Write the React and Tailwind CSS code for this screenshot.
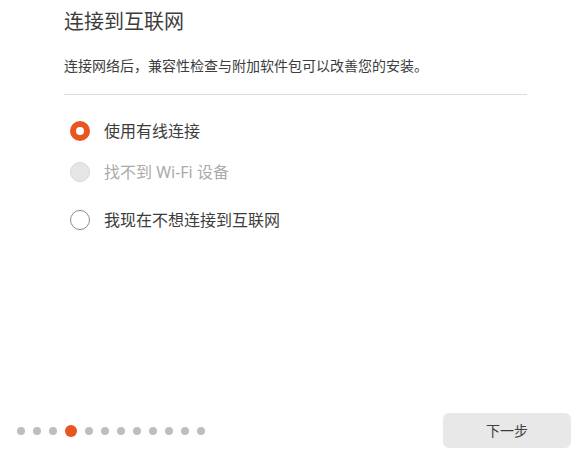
import { useState } from 'react';

const options = [
  { id: 'wired', label: '使用有线连接', disabled: false, mt: 'mt-[24px]' },
  { id: 'wifi', label: '找不到 Wi-Fi 设备', disabled: true, mt: 'mt-[17px]' },
  { id: 'none', label: '我现在不想连接到互联网', disabled: false, mt: 'mt-[24px]' },
];

function Radio({ checked, disabled }) {
  if (disabled) {
    return <span className="w-[20px] h-[20px] rounded-full bg-[#e6e6e6] border border-[#d6d6d6] shrink-0" />;
  }
  if (checked) {
    return (
      <span className="w-[20px] h-[20px] rounded-full bg-[#e95420] flex items-center justify-center shrink-0">
        <span className="w-[8px] h-[8px] rounded-full bg-white" />
      </span>
    );
  }
  return <span className="w-[20px] h-[20px] rounded-full bg-white border border-[#8c8c8c] shrink-0" />;
}

export default function App() {
  const [selected, setSelected] = useState('wired');
  const steps = 12;
  const current = 3;

  return (
    <div className="w-[580px] h-[459px] bg-white flex flex-col text-[#3d3d3d]" style={{ fontFamily: '"Noto Sans", "Noto Sans CJK SC", sans-serif' }}>
      <div className="pl-[64px] pr-[53px]">
        <h1 className="mt-[8px] h-[28px] leading-[28px] text-[20px] font-normal">连接到互联网</h1>
        <p className="mt-[20px] h-[20px] leading-[20px] text-[14px]">连接网络后，兼容性检查与附加软件包可以改善您的安装。</p>
        <div className="mt-[18px] border-t border-[#dcdcdc]" />
        {options.map((o) => (
          <button
            key={o.id}
            disabled={o.disabled}
            onClick={() => setSelected(o.id)}
            className={`${o.mt} h-[24px] flex items-center gap-[14px] pl-[6px] text-left`}
          >
            <Radio checked={selected === o.id} disabled={o.disabled} />
            <span className={`text-[16px] leading-[24px] ${o.disabled ? 'text-[#ababab]' : 'text-[#3d3d3d]'}`}>{o.label}</span>
          </button>
        ))}
      </div>

      <div className="mt-auto flex items-center justify-between pl-[17px] pr-[9px] pb-[11px]">
        <div className="flex items-center gap-[8px]">
          {Array.from({ length: steps }).map((_, i) => (
            i === current
              ? <span key={i} className="w-[12px] h-[12px] rounded-full bg-[#e95420]" />
              : <span key={i} className="w-[8px] h-[8px] rounded-full bg-[#bebebe]" />
          ))}
        </div>
        <button className="w-[128px] h-[35px] rounded-[6px] bg-[#e8e8e8] text-[14px] text-[#3d3d3d]">下一步</button>
      </div>
    </div>
  );
}
